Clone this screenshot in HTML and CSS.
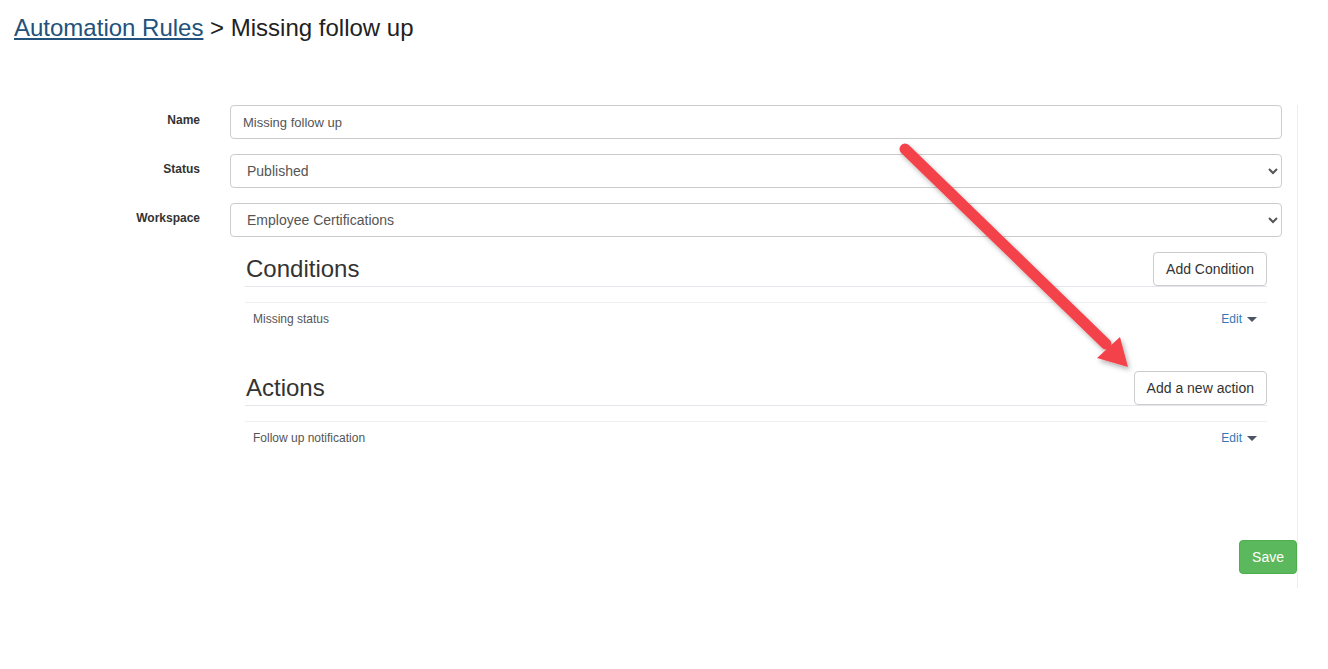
FILE: index.html
```html
<!DOCTYPE html>
<html>
<head>
<meta charset="utf-8">
<link rel="stylesheet" href="styles.css">
</head>
<body>
<h1 class="page-title"><a href="#" class="crumb-link">Automation Rules</a> &gt; Missing follow up</h1>
<div class="panel">
  <div class="form-row">
    <label class="form-label">Name</label>
    <input class="form-control" type="text" value="Missing follow up">
  </div>
  <div class="form-row">
    <label class="form-label">Status</label>
    <select class="form-control select-control"><option>Published</option></select>
  </div>
  <div class="form-row">
    <label class="form-label">Workspace</label>
    <select class="form-control select-control"><option>Employee Certifications</option></select>
  </div>
  <div class="sections">
    <div class="section">
      <div class="section-head">
        <h2 class="section-title">Conditions</h2>
        <button class="btn">Add Condition</button>
      </div>
      <ul class="item-list">
        <li class="item"><span>Missing status</span><a href="#" class="edit">Edit <span class="caret"></span></a></li>
      </ul>
    </div>
    <div class="section">
      <div class="section-head">
        <h2 class="section-title">Actions</h2>
        <button class="btn">Add a new action</button>
      </div>
      <ul class="item-list">
        <li class="item"><span>Follow up notification</span><a href="#" class="edit">Edit <span class="caret"></span></a></li>
      </ul>
    </div>
  </div>
  <div class="actions-bar">
    <button class="btn btn-save">Save</button>
  </div>
</div>
<svg class="arrow" width="1328" height="669" viewBox="0 0 1328 669">
  <defs>
    <filter id="sh" x="-20%" y="-20%" width="140%" height="140%">
      <feDropShadow dx="2" dy="3" stdDeviation="2.5" flood-color="#000" flood-opacity="0.3"/>
    </filter>
  </defs>
  <g filter="url(#sh)">
    <line x1="905" y1="149" x2="1106" y2="344" stroke="#f4434b" stroke-width="11" stroke-linecap="round"/>
    <polygon points="1128,367 1097,358 1120,337" fill="#f4434b"/>
  </g>
</svg>
</body>
</html>
```
FILE: styles.css
```css
html, body {
  margin: 0;
  padding: 0;
  background: #fff;
}
body {
  font-family: "Liberation Sans", Arial, sans-serif;
  color: #333;
  position: relative;
  width: 1328px;
  height: 669px;
  overflow: hidden;
}
.page-title {
  margin: 0;
  padding: 15px 0 0 14px;
  font-size: 24px;
  font-weight: normal;
  line-height: 1.1;
  color: #222;
}
.crumb-link {
  color: #22527b;
  text-decoration: underline;
}
.panel {
  margin-top: 64px;
  width: 1282px;
  padding-right: 15px;
  border-right: 1px solid #eee;
  padding-bottom: 14px;
  display: flex;
  flex-direction: column;
}
.form-row {
  display: flex;
  align-items: flex-start;
  margin-bottom: 15px;
}
.form-label {
  width: 200px;
  flex: none;
  text-align: right;
  font-size: 12px;
  font-weight: bold;
  padding-top: 8px;
  margin-right: 30px;
  color: #333;
}
.form-control {
  flex: 1;
  box-sizing: border-box;
  height: 34px;
  border: 1px solid #ccc;
  border-radius: 4px;
  padding: 6px 12px;
  font-family: "Liberation Sans", Arial, sans-serif;
  font-size: 14px;
  color: #555;
  background: #fff;
  margin: 0;
}
input.form-control {
  font-size: 13px;
}
.select-control {
  padding-left: 12px;
}
.sections {
  margin-left: 245px;
  margin-right: 15px;
}
.section {
  margin-bottom: 35px;
}
.section-head {
  display: flex;
  justify-content: space-between;
  align-items: flex-start;
  height: 34px;
  border-bottom: 1px solid #e3e6ea;
}
.section-title {
  margin: 0;
  font-size: 24px;
  line-height: 34px;
  font-weight: normal;
  color: #333;
  padding-left: 1px;
}
.btn {
  font-family: "Liberation Sans", Arial, sans-serif;
  font-size: 14px;
  line-height: 20px;
  padding: 6px 12px;
  border: 1px solid #ccc;
  border-radius: 4px;
  background: #fff;
  color: #333;
  margin: 0;
}
.item-list {
  list-style: none;
  margin: 15px 0 0;
  padding: 0;
  border-top: 1px solid #eef0f2;
}
.item {
  display: flex;
  justify-content: space-between;
  align-items: center;
  padding: 8px 10px 9px 8px;
  font-size: 12px;
  line-height: 16px;
  color: #555;
}
.edit {
  color: #337ab7;
  text-decoration: none;
  display: flex;
  align-items: center;
}
.caret {
  display: inline-block;
  width: 0;
  height: 0;
  margin-left: 5px;
  border-left: 5px solid transparent;
  border-right: 5px solid transparent;
  border-top: 5px solid #4a5566;
}
.actions-bar {
  display: flex;
  justify-content: flex-end;
  margin-top: 50px;
}
.btn-save {
  background: #5cb85c;
  border-color: #4cae4c;
  color: #fff;
  margin-right: -15px;
}
.arrow {
  position: absolute;
  left: 0;
  top: 0;
  pointer-events: none;
}
```
